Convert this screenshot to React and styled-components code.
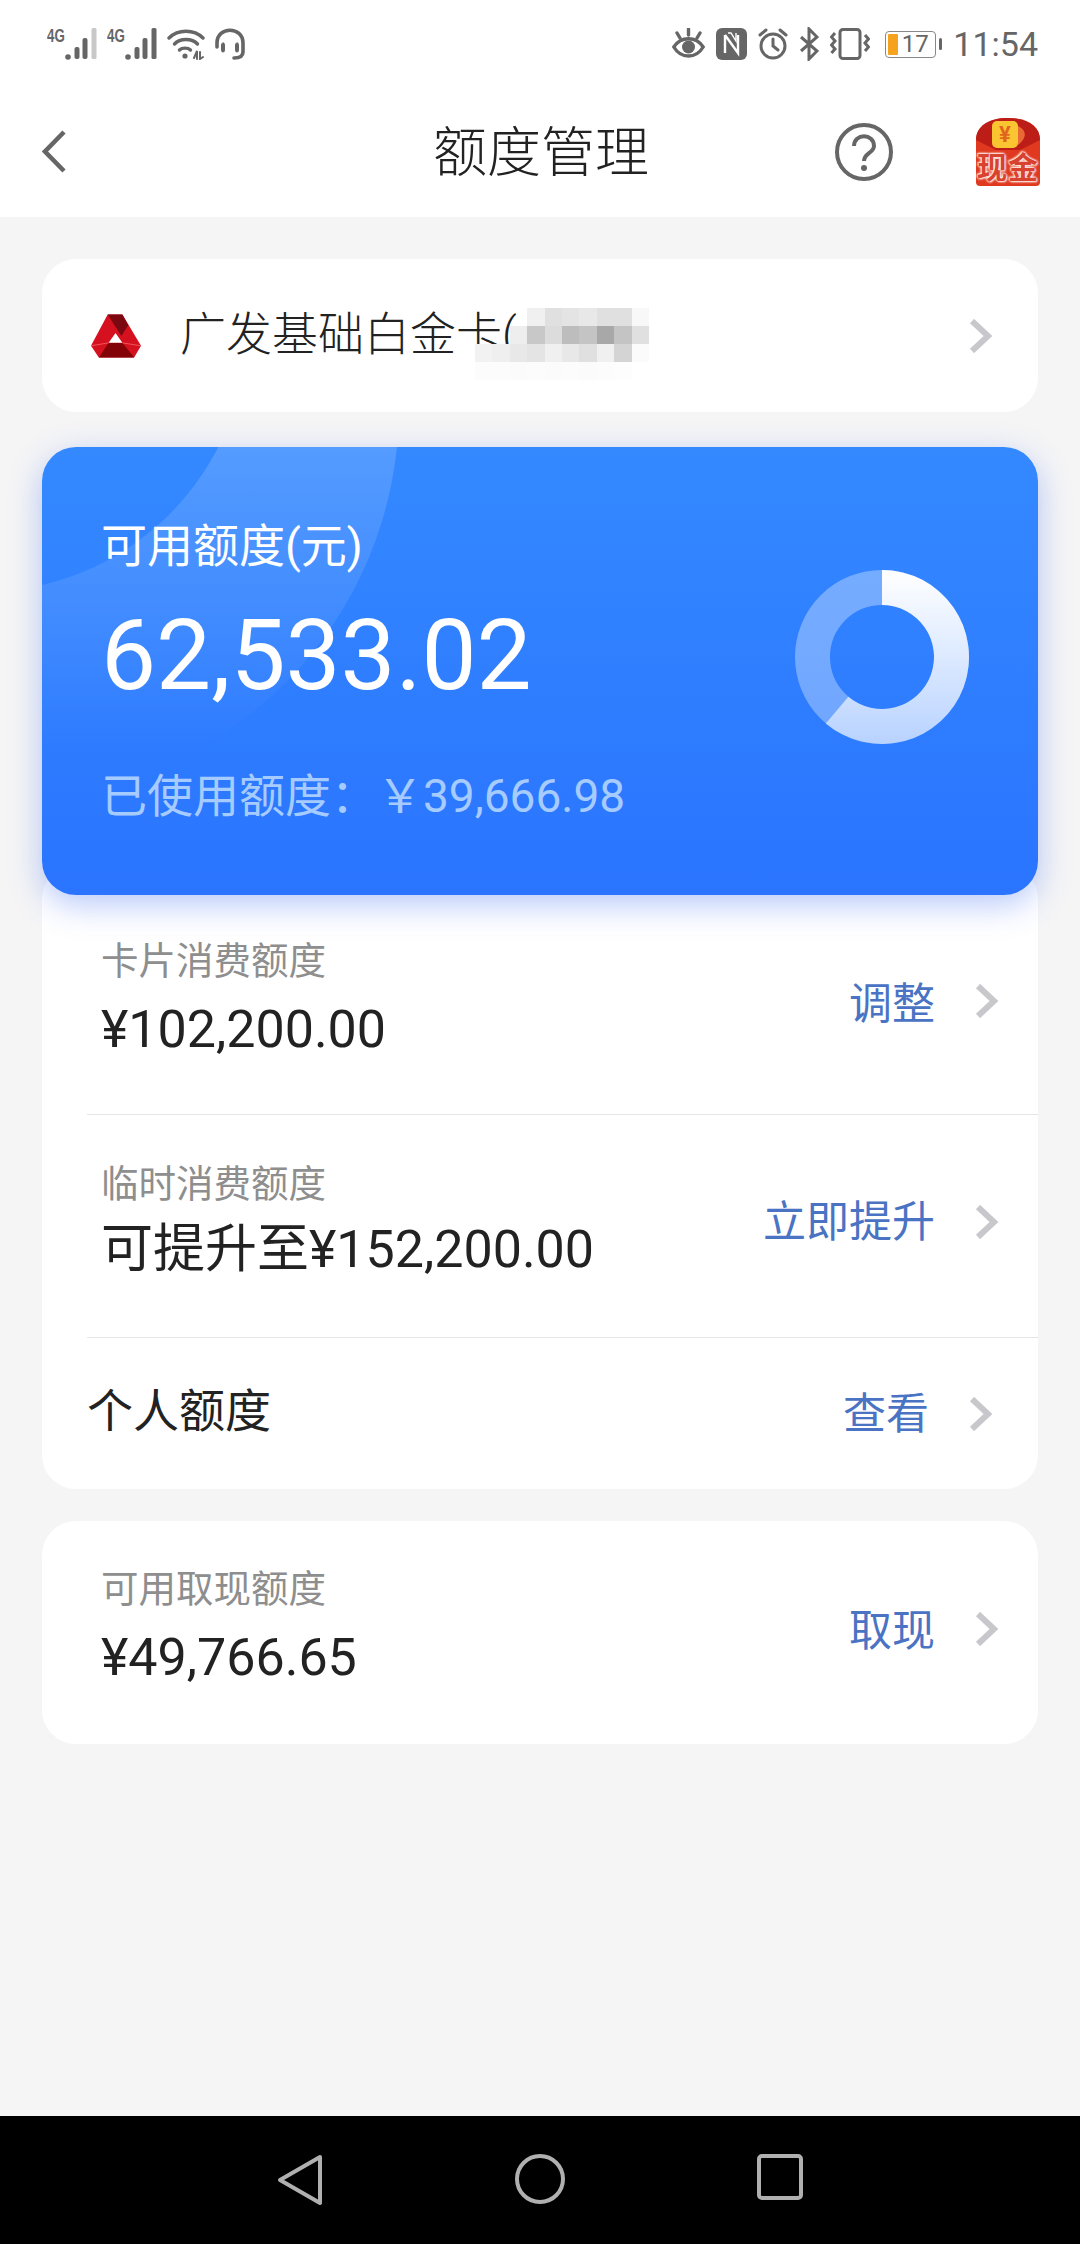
import React from 'react'
import styled, {createGlobalStyle} from 'styled-components'

const GlobalStyle = createGlobalStyle`
body {
    margin: 0;
    background: #f5f5f6;
    font-family: Roboto, "Noto Sans CJK SC", sans-serif;
}
`

const Page = styled.div`
display: flex;
flex-direction: column;
width: 1080px;
height: 2244px;
overflow: hidden;
`

const TopArea = styled.div`
background: #fff;
`

const StatusBar = styled.div`
display: flex;
align-items: center;
justify-content: space-between;
height: 90px;
padding: 0 42px 2px 47px;
box-sizing: border-box;
color: #666;
`

const StatusGroup = styled.div`
display: flex;
align-items: center;
gap: ${props => props.$gap || 10}px;
`

const SignalWrap = styled.div`
display: flex;
align-items: flex-start;
height: 32px;
`

const NetLabel = styled.span`
font-family: "Liberation Sans", sans-serif;
font-size: 18px;
font-weight: 700;
line-height: 16px;
transform: scaleX(0.74);
transform-origin: left top;
width: 18px;
color: #666;
`

const BatteryBody = styled.div`
position: relative;
display: flex;
align-items: center;
justify-content: center;
width: 51px;
height: 27px;
box-sizing: border-box;
border: 1px solid #888;
border-radius: 4px;
font-size: 24px;
line-height: 25px;
color: #666;
padding-left: 9px;
`

const BatteryLevel = styled.div`
position: absolute;
left: 2px;
top: 2px;
bottom: 2px;
width: 10px;
background: #f5a31f;
border-radius: 1px;
`

const BatteryTip = styled.div`
width: 3px;
height: 12px;
margin-left: 3px;
background: #666;
border-radius: 2px;
`

const Battery = styled.div`
display: flex;
align-items: center;
margin-left: 4px;
`

const Clock = styled.span`
font-size: 34px;
line-height: 40px;
color: #666;
`

const Header = styled.div`
display: grid;
grid-template-columns: 1fr auto 1fr;
align-items: center;
height: 127px;
padding: 0 40px 0 42px;
`

const BackIcon = styled.svg`
margin-bottom: 4px;
`

const Title = styled.h1`
margin: 0;
font-size: 54px;
font-weight: 300;
line-height: 70px;
color: #222;
`

const HeaderActions = styled.div`
display: flex;
align-items: center;
justify-content: flex-end;
gap: 83px;
margin-bottom: 4px;
`

const RedPacket = styled.div`
position: relative;
width: 64px;
height: 68px;
`

const PacketSign = styled.span`
position: absolute;
top: 3px;
left: 14px;
width: 30px;
text-align: center;
font-size: 22px;
font-weight: 700;
line-height: 27px;
color: #e0661f;
`

const PacketLabel = styled.span`
position: absolute;
left: -1px;
bottom: 2px;
width: 66px;
text-align: center;
font-size: 30px;
font-weight: 700;
line-height: 32px;
letter-spacing: 1px;
white-space: nowrap;
color: #d8422f;
text-shadow: 0 0 2px #fff, 0 0 3px #fde4dc, 1px 1px 2px #fde4dc, -1px -1px 2px #fde4dc;
`

const Main = styled.div`
flex: 1;
display: flex;
flex-direction: column;
padding: 42px 42px 0;
`

const Card = styled.section`
background: #fff;
border-radius: 34px;
`

const BankCard = styled(Card)`
display: flex;
align-items: center;
height: 153px;
padding: 0 45px 0 49px;
margin-bottom: 35px;
`

const BankName = styled.div`
position: relative;
flex: 1;
margin-left: 39px;
margin-top: -3px;
font-size: 46px;
font-weight: 300;
line-height: 60px;
color: #222;
white-space: nowrap;
`

const Mosaic = styled.div`
position: absolute;
left: 295px;
top: 4px;
display: grid;
grid-template-columns: repeat(10, 17.4px);
grid-auto-rows: 18px;
`

const MosaicCell = styled.div`
background: ${props => props.$tone};
`

const HeroShadow = styled.div`
position: relative;
z-index: 1;
border-radius: 34px;
box-shadow: 0 10px 32px rgba(50, 100, 240, 0.34);
`

const Hero = styled.section`
position: relative;
display: flex;
justify-content: space-between;
align-items: flex-start;
height: 448px;
overflow: hidden;
padding: 0 69px 0 59px;
border-radius: 34px;
background: linear-gradient(180deg, #3489ff 0%, #2a74ff 100%);
`

const HeroArc = styled.svg`
position: absolute;
left: 0;
top: 0;
`

const HeroText = styled.div`
position: relative;
padding-top: 71px;
`

const HeroLabel = styled.div`
font-size: 46px;
line-height: 56px;
color: #fff;
`

const HeroAmount = styled.div`
margin-top: 26px;
font-size: 98px;
line-height: 112px;
color: #fff;
`

const HeroUsed = styled.div`
margin-top: 56px;
font-size: 46px;
line-height: 56px;
color: #a6cbff;
white-space: nowrap;
`

const Donut = styled.svg`
position: relative;
margin-top: 123px;
`

const LimitCard = styled(Card)`
margin-top: -30px;
padding-top: 30px;
margin-bottom: 32px;
`

const Row = styled.div`
display: flex;
align-items: center;
justify-content: space-between;
height: ${props => props.$height}px;
margin-left: 45px;
padding: 0 ${props => props.$right || 39}px 0 ${props => props.$plain ? 0 : 14}px;
box-sizing: border-box;
border-top: ${props => props.$line ? '1px solid #e6e6e6' : 'none'};
`

const Info = styled.div`
display: flex;
flex-direction: column;
margin-bottom: 9px;
`

const InfoLabel = styled.div`
font-size: 37.5px;
line-height: 60px;
color: #8e8e8e;
`

const InfoValue = styled.div`
margin-top: -${props => props.$pull}px;
font-size: 52px;
line-height: 80px;
color: #222;
`

const PlainLabel = styled.div`
margin-bottom: 5px;
font-size: 46px;
line-height: 60px;
color: #222;
`

const ActionWrap = styled.div`
display: flex;
align-items: center;
gap: 40px;
margin-bottom: ${props => props.$lift || 0}px;
`

const ActionText = styled.span`
font-size: 43px;
line-height: 60px;
color: #4a73c4;
`

const ChevronBox = styled.span`
display: flex;
margin-bottom: ${props => props.$lift || 0}px;
`

const NavBar = styled.nav`
display: flex;
align-items: center;
height: 128px;
background: #000;
`

const NavButtons = styled.div`
display: grid;
grid-template-columns: repeat(3, 240px);
margin: 0 auto;
`

const NavSlot = styled.div`
display: flex;
justify-content: center;
`

const Chevron = ({lift}) => <ChevronBox $lift={lift}>
    <svg width='24' height='34' viewBox='0 0 24 34'>
        <path d='M3 2 L19 17 L3 32' fill='none' stroke='#c8c8cc' strokeWidth='6' />
    </svg>
</ChevronBox>

const SignalBars = ({last = '#666'}) => <svg width='32' height='32' viewBox='0 0 32 32'>
    <circle cx='3' cy='29' r='2.8' fill='#666' />
    <rect x='9.5' y='19' width='5' height='12' rx='2' fill='#666' />
    <rect x='17.5' y='10' width='5' height='21' rx='2' fill='#666' />
    <rect x='26.5' y='0' width='5' height='31' rx='1.5' fill={last} />
</svg>

const WifiIcon = () => <svg width='38' height='32' viewBox='0 0 38 32' fill='none' stroke='#666' strokeWidth='3.4' strokeLinecap='round'>
    <path d='M2 10 C11 1 27 1 36 10' />
    <path d='M7.5 16 C13 10 25 10 30.5 16' />
    <path d='M12.5 22 C15 19.5 21 19.5 23.5 22' />
    <circle cx='18' cy='28' r='2.6' fill='#666' stroke='none' />
    <path d='M27 30 L30 23 V31 M33 24 V31 L36 29' strokeWidth='2' />
</svg>

const HeadsetIcon = () => <svg width='30' height='32' viewBox='0 0 30 32' fill='none' stroke='#666' strokeWidth='3.6' strokeLinecap='round'>
    <path d='M2 19 V15 C2 -2 28 -2 28 15 V24 C28 28 25 30 19 30' />
    <rect x='6.5' y='15' width='3' height='9' rx='1.5' fill='#666' strokeWidth='1' />
    <rect x='20.5' y='15' width='3' height='9' rx='1.5' fill='#666' strokeWidth='1' />
</svg>

const EyeIcon = () => <svg width='33' height='32' viewBox='0 0 33 32' fill='none' stroke='#666' strokeWidth='3.4'>
    <path d='M1.8 19 C9 8 24 8 31.2 19 C24 31 9 31 1.8 19 Z' />
    <circle cx='16.5' cy='19' r='6.5' fill='#666' stroke='none' />
    <path d='M5 5 L8 10 M16.5 1 V7 M28 5 L25 10' strokeLinecap='round' />
</svg>

const NfcIcon = () => <svg width='31' height='32' viewBox='0 0 31 32'>
    <rect width='31' height='32' rx='6' fill='#666' />
    <path d='M9 7 V25 M9 7 L22 25 V7' fill='none' stroke='#fff' strokeWidth='2.4' />
    <path d='M12 5 H15 L20 13 V5' fill='none' stroke='#fff' strokeWidth='1.4' />
</svg>

const AlarmIcon = () => <svg width='30' height='32' viewBox='0 0 30 32' fill='none' stroke='#666' strokeWidth='3' strokeLinecap='round'>
    <circle cx='15' cy='18' r='12' />
    <path d='M15 11 V18 L20 22' />
    <path d='M2 7 L8 2 M28 7 L22 2' />
</svg>

const BluetoothIcon = () => <svg width='20' height='34' viewBox='0 0 20 34' fill='none' stroke='#666' strokeWidth='3'>
    <path d='M2 10 L18 24 L10 32 V2 L18 10 L2 24' />
</svg>

const VibrateIcon = () => <svg width='40' height='32' viewBox='0 0 40 32' fill='none' stroke='#666' strokeWidth='3'>
    <rect x='10' y='1.5' width='20' height='29' rx='3' />
    <path d='M5 5 L1.5 9 L5 13 L1.5 17 L5 21 L1.5 25' />
    <path d='M35 7 L38.5 11 L35 15 L38.5 19 L35 23' />
</svg>

const QuestionIcon = () => <svg width='58' height='58' viewBox='0 0 58 58'>
    <circle cx='29' cy='29' r='27' fill='none' stroke='#666' strokeWidth='4' />
    <path d='M19 23 C19 10 39 10 39 23 C39 30 29 30 29 38' fill='none' stroke='#666' strokeWidth='4' />
    <circle cx='29' cy='45' r='3' fill='#666' />
</svg>

const BankLogo = () => <svg width='50' height='44' viewBox='0 0 51 44'>
    <path d='M17 0 H32 L51 32 L44 44 H8 L0 32 Z' fill='#d5111f' />
    <path d='M17 0 H32 L38 11 L31 22 Z' fill='#7b0710' />
    <path d='M18 29 H32 L44 44 H8 Z' fill='#830206' />
    <path d='M25 19 L32 29 H18 Z' fill='#fff' />
    <path d='M0 32 L18 29 M32 29 L51 32' stroke='#f2545c' strokeWidth='1' fill='none' />
</svg>

const PacketArt = () => <svg width='64' height='68' viewBox='0 0 64 68'>
    <path d='M0 22 C0 8 13 0 32 0 C51 0 64 8 64 22 V64 Q64 68 60 68 H4 Q0 68 0 64 Z' fill='#e0391f' />
    <path d='M0 22 C0 8 13 0 32 0 C51 0 64 8 64 22 L44 32 H20 Z' fill='#bd1d17' />
    <rect x='16' y='3' width='26' height='27' rx='5' fill='#fbc531' />
    <path d='M42 8 C50 12 52 19 42 27 Z' fill='#ea6a35' />
</svg>

const NavBack = () => <svg width='46' height='52' viewBox='0 0 46 52'>
    <path d='M43 3 L3 26 L43 49 Z' fill='none' stroke='#b0b0b0' strokeWidth='4' strokeLinejoin='round' />
</svg>

const NavHome = () => <svg width='50' height='50' viewBox='0 0 50 50'>
    <circle cx='25' cy='25' r='23' fill='none' stroke='#b0b0b0' strokeWidth='4' />
</svg>

const NavRecent = () => <svg width='46' height='46' viewBox='0 0 46 46'>
    <rect x='2' y='2' width='42' height='42' rx='3' fill='none' stroke='#b0b0b0' strokeWidth='4' />
</svg>

const mosaicTones = [
    'transparent', 'transparent', 'transparent', '#f0f0f0', '#e0e0e0', '#e4e4e4', '#e8e8e8', '#e0e0e0', '#e0e0e0', '#f8f8f8',
    'transparent', 'transparent', '#eee', '#c8c8c8', '#dcdcdc', '#bdbdbd', '#c4c4c4', '#a8a8a8', '#c4c4c4', '#e0e0e0',
    '#f2f2f2', '#efefef', '#e8e8e8', '#e4e4e4', '#f0f0f0', '#e8e8e8', '#e0e0e0', '#f0f0f0', '#d4d4d4', '#fbfbfb',
    '#fcfcfc', '#fcfcfc', '#fbfbfb', '#fcfcfc', '#fbfbfb', '#fcfcfc', '#fbfbfb', '#fcfcfc', '#fdfdfd', '#fff',
]

const donutPath = (share) => {
    const angle = share * 2 * Math.PI
    const outer = 87
    const inner = 52
    const c = 87
    const x1 = c + outer * Math.sin(angle)
    const y1 = c - outer * Math.cos(angle)
    const x2 = c + inner * Math.sin(angle)
    const y2 = c - inner * Math.cos(angle)
    const big = share > 0.5 ? 1 : 0
    return `M${c} 0 A${outer} ${outer} 0 ${big} 1 ${x1} ${y1} L${x2} ${y2} A${inner} ${inner} 0 ${big} 0 ${c} ${c - inner} Z`
}

export default function App() {
    return <Page>
        <GlobalStyle />
        <TopArea>
            <StatusBar>
                <StatusGroup $gap={10}>
                    <SignalWrap>
                        <NetLabel>4G</NetLabel>
                        <SignalBars last='#c8c8c8' />
                    </SignalWrap>
                    <SignalWrap>
                        <NetLabel>4G</NetLabel>
                        <SignalBars />
                    </SignalWrap>
                    <WifiIcon />
                    <HeadsetIcon />
                </StatusGroup>
                <StatusGroup $gap={11}>
                    <EyeIcon />
                    <NfcIcon />
                    <AlarmIcon />
                    <BluetoothIcon />
                    <VibrateIcon />
                    <Battery>
                        <BatteryBody>
                            <BatteryLevel />
                            17
                        </BatteryBody>
                        <BatteryTip />
                    </Battery>
                    <Clock>11:54</Clock>
                </StatusGroup>
            </StatusBar>
            <Header>
                <BackIcon width='25' height='43' viewBox='0 0 25 43'>
                    <path d='M22 2 L3 21.5 L22 41' fill='none' stroke='#666' strokeWidth='4.5' />
                </BackIcon>
                <Title>额度管理</Title>
                <HeaderActions>
                    <QuestionIcon />
                    <RedPacket>
                        <PacketArt />
                        <PacketSign>¥</PacketSign>
                        <PacketLabel>现金</PacketLabel>
                    </RedPacket>
                </HeaderActions>
            </Header>
        </TopArea>
        <Main>
            <BankCard>
                <BankLogo />
                <BankName>
                    广发基础白金卡(
                    <Mosaic>
                        {mosaicTones.map((tone, i) => <MosaicCell key={i} $tone={tone} />)}
                    </Mosaic>
                </BankName>
                <Chevron />
            </BankCard>
            <HeroShadow>
                <Hero>
                    <HeroArc width='996' height='448' viewBox='0 0 996 448'>
                        <defs>
                            <linearGradient id='arcFade' gradientUnits='userSpaceOnUse' x1='0' y1='0' x2='0' y2='448'>
                                <stop offset='0' stopColor='#fff' stopOpacity='0.16' />
                                <stop offset='0.42' stopColor='#fff' stopOpacity='0.07' />
                                <stop offset='0.68' stopColor='#fff' stopOpacity='0' />
                            </linearGradient>
                        </defs>
                        <path
                            fillRule='evenodd'
                            fill='url(#arcFade)'
                            d='M-427 -40 a392 392 0 1 0 784 0 a392 392 0 1 0 -784 0 Z M-325 -120 a265 265 0 1 0 530 0 a265 265 0 1 0 -530 0 Z'
                        />
                    </HeroArc>
                    <HeroText>
                        <HeroLabel>可用额度(元)</HeroLabel>
                        <HeroAmount>62,533.02</HeroAmount>
                        <HeroUsed>已使用额度：￥39,666.98</HeroUsed>
                    </HeroText>
                    <Donut width='174' height='174' viewBox='0 0 174 174'>
                        <defs>
                            <linearGradient id='ringFade' x1='0' y1='0' x2='0' y2='1'>
                                <stop offset='0' stopColor='#fff' />
                                <stop offset='1' stopColor='#fff' stopOpacity='0.5' />
                            </linearGradient>
                        </defs>
                        <circle cx='87' cy='87' r='69.5' fill='none' stroke='#fff' strokeOpacity='0.33' strokeWidth='35' />
                        <path d={donutPath(62533.02 / 102200)} fill='url(#ringFade)' />
                    </Donut>
                </Hero>
            </HeroShadow>
            <LimitCard>
                <Row $height={219}>
                    <Info>
                        <InfoLabel>卡片消费额度</InfoLabel>
                        <InfoValue $pull={1}>¥102,200.00</InfoValue>
                    </Info>
                    <ActionWrap $lift={2}>
                        <ActionText>调整</ActionText>
                        <Chevron lift={5} />
                    </ActionWrap>
                </Row>
                <Row $height={223} $line>
                    <Info>
                        <InfoLabel>临时消费额度</InfoLabel>
                        <InfoValue $pull={4}>可提升至¥152,200.00</InfoValue>
                    </Info>
                    <ActionWrap $lift={8}>
                        <ActionText>立即提升</ActionText>
                        <Chevron />
                    </ActionWrap>
                </Row>
                <Row $height={152} $line $plain $right={45}>
                    <PlainLabel>个人额度</PlainLabel>
                    <ActionWrap>
                        <ActionText>查看</ActionText>
                        <Chevron />
                    </ActionWrap>
                </Row>
            </LimitCard>
            <Card>
                <Row $height={223}>
                    <Info>
                        <InfoLabel>可用取现额度</InfoLabel>
                        <InfoValue $pull={1}>¥49,766.65</InfoValue>
                    </Info>
                    <ActionWrap $lift={3}>
                        <ActionText>取现</ActionText>
                        <Chevron lift={5} />
                    </ActionWrap>
                </Row>
            </Card>
        </Main>
        <NavBar>
            <NavButtons>
                <NavSlot><NavBack /></NavSlot>
                <NavSlot><NavHome /></NavSlot>
                <NavSlot><NavRecent /></NavSlot>
            </NavButtons>
        </NavBar>
    </Page>
}
